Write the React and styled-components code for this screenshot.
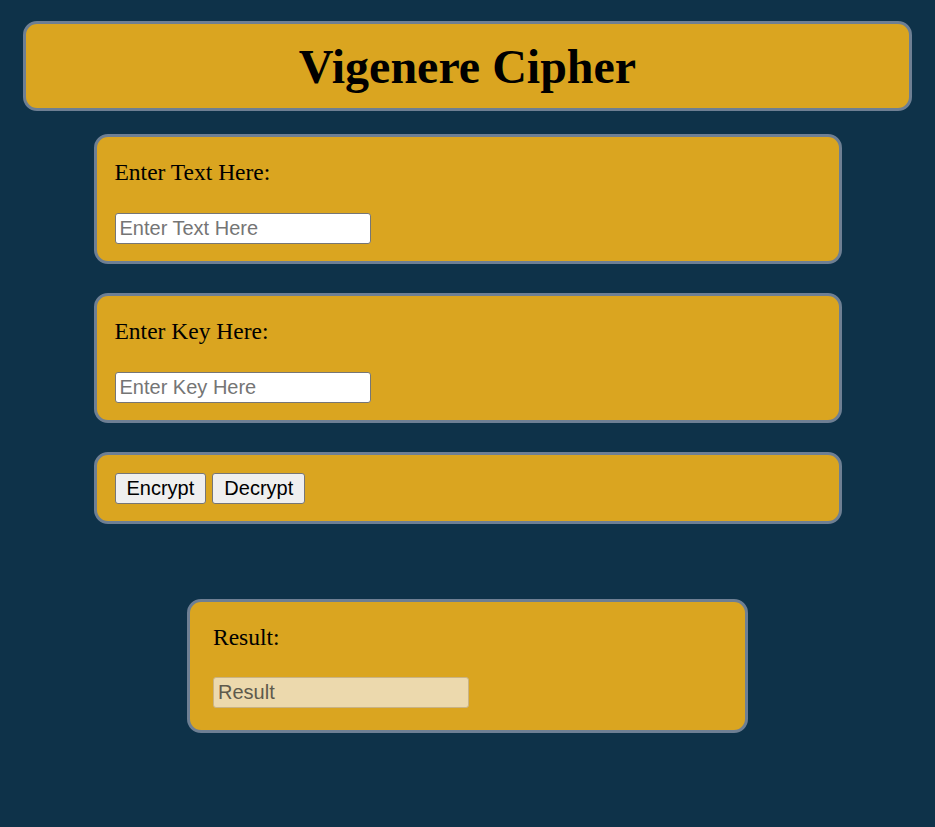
import React from "react";
import styled, { createGlobalStyle } from "styled-components";

const Global = createGlobalStyle`
  html, body { margin: 0; padding: 0; }
  body {
    background: #0e3249;
    font-family: "Liberation Serif", "Times New Roman", serif;
    color: #000;
  }
  * { box-sizing: border-box; }
`;

const Page = styled.div`
  display: flex;
  flex-direction: column;
  align-items: center;
  padding: 21px 0 40px;
`;

const Header = styled.header`
  width: 95%;
  background: #daa520;
  border: 3px solid #6e7f93;
  border-radius: 14px;
  padding: 15px 0 14px;
  text-align: center;
`;

const Title = styled.h1`
  margin: 0;
  font-size: 48px;
  font-weight: bold;
  line-height: 55px;
`;

const Card = styled.section`
  width: ${(p) => p.$width};
  margin-top: ${(p) => p.$top};
  background: #daa520;
  border: 3px solid #6e7f93;
  border-radius: 14px;
  padding: ${(p) => p.$pad};
  display: flex;
  flex-direction: column;
  gap: ${(p) => p.$gap || "25px"};
`;

const Label = styled.label`
  font-size: 23.5px;
  line-height: 31px;
`;

const Input = styled.input`
  width: 256px;
  height: 31px;
  font-family: "Liberation Sans", Arial, sans-serif;
  font-size: 20px;
  padding: 2px 4px;
  border: 1px solid ${(p) => (p.readOnly ? "#c9b384" : "#767676")};
  border-radius: 3px;
  background: ${(p) => (p.readOnly ? "#ecd9ad" : "#fff")};
  color: #000;
  outline: none;
  &::placeholder {
    color: ${(p) => (p.readOnly ? "#5e5a4c" : "#757575")};
  }
`;

const ButtonRow = styled.div`
  display: flex;
  gap: 6px;
`;

const Button = styled.button`
  height: 31px;
  padding: 0 11px;
  font-family: "Liberation Sans", Arial, sans-serif;
  font-size: 20px;
  color: #000;
  background: #efefef;
  border: 1px solid #767676;
  border-radius: 3px;
`;

export default function App() {
  return (
    <>
      <Global />
      <Page>
        <Header>
          <Title>Vigenere Cipher</Title>
        </Header>
        <Card $width="80%" $top="23px" $pad="20px 18px 17px">
          <Label>Enter Text Here:</Label>
          <Input placeholder="Enter Text Here" />
        </Card>
        <Card $width="80%" $top="29px" $pad="20px 18px 17px">
          <Label>Enter Key Here:</Label>
          <Input placeholder="Enter Key Here" />
        </Card>
        <Card $width="80%" $top="29px" $pad="18px 18px 17px">
          <ButtonRow>
            <Button>Encrypt</Button>
            <Button>Decrypt</Button>
          </ButtonRow>
        </Card>
        <Card $width="60%" $top="75px" $gap="24px" $pad="20px 23px 22px">
          <Label>Result:</Label>
          <Input readOnly placeholder="Result" />
        </Card>
      </Page>
    </>
  );
}
